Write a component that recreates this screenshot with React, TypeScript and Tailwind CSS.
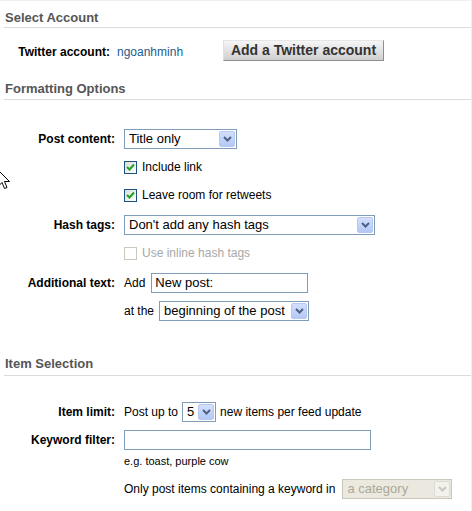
import React from "react";

function Chevron({ color }: { color: string }) {
  return (
    <svg width="9" height="6" viewBox="0 0 9 6">
      <path d="M1 1 L4.5 4.5 L8 1" fill="none" stroke={color} strokeWidth="2" />
    </svg>
  );
}

function Select({
  value,
  className,
  disabled,
}: {
  value: string;
  className: string;
  disabled?: boolean;
}) {
  return (
    <div
      className={`flex h-[20px] shrink-0 items-center justify-between border pr-[1px] text-[13px] ${
        disabled
          ? "border-[#c9c7ba] bg-[#ebe9df] text-[#aca899]"
          : "border-[#7f9db9] bg-white text-black"
      } ${className}`}
    >
      <span className="pl-[4px] leading-[16px] whitespace-nowrap">{value}</span>
      <div
        className={`flex h-[16px] w-[16px] items-center justify-center rounded-[2px] border ${
          disabled
            ? "border-[#dedcd2] bg-[#f3f2ec]"
            : "border-[#b7c8ef] bg-linear-to-b from-[#d3e0fc] to-[#b4c8f6]"
        }`}
      >
        <Chevron color={disabled ? "#c9c7bc" : "#4d6185"} />
      </div>
    </div>
  );
}

function Input({ value, className }: { value?: string; className: string }) {
  return (
    <div
      className={`flex h-[20px] shrink-0 items-center border border-[#7f9db9] bg-white pl-[3px] text-[13px] text-black ${className}`}
    >
      {value}
    </div>
  );
}

function Checkbox({
  checked,
  disabled,
  label,
}: {
  checked?: boolean;
  disabled?: boolean;
  label: string;
}) {
  return (
    <div className="flex items-center">
      <div
        className={`flex h-[13px] w-[13px] items-center justify-center border ${
          disabled
            ? "border-[#cac8bb] bg-white"
            : "border-[#1c5180] bg-linear-to-br from-[#dcdcd7] to-white"
        }`}
      >
        {checked && (
          <svg width="9" height="9" viewBox="0 0 9 9">
            <path d="M1 4 L3.5 6.5 L8 1.5" fill="none" stroke="#21a121" strokeWidth="2" />
          </svg>
        )}
      </div>
      <span
        className={`ml-[5px] text-[12px] ${disabled ? "text-[#a8a8a8]" : "text-black"}`}
      >
        {label}
      </span>
    </div>
  );
}

function SectionHeader({ title, className }: { title: string; className: string }) {
  return (
    <div
      className={`ml-[4px] border-b border-[#dcdcdc] pl-[1px] text-[13px] leading-[16px] font-bold text-[#555555] ${className}`}
    >
      {title}
    </div>
  );
}

function Row({
  label,
  children,
  className,
}: {
  label?: string;
  children: React.ReactNode;
  className?: string;
}) {
  return (
    <div className={`flex h-[28px] items-center ${className ?? ""}`}>
      <div className="w-[115px] shrink-0 text-right text-[12px] font-bold text-black">
        {label}
      </div>
      <div className="ml-[9px] flex items-center text-[12px] text-black">{children}</div>
    </div>
  );
}

export default function App() {
  return (
    <div
      className="relative h-[511px] w-[472px] overflow-hidden border-t border-r border-[#efefef] bg-white"
      style={{ fontFamily: '"Liberation Sans", Arial, sans-serif' }}
    >
      {/* Select Account */}
      <SectionHeader title="Select Account" className="pt-[9px] pb-[1px]" />
      <div className="mt-[12px] flex h-[21px] items-center">
        <div className="w-[110px] shrink-0 pt-[2px] text-right text-[12px] font-bold text-black">
          Twitter account:
        </div>
        <div className="ml-[7px] w-[106px] shrink-0 pt-[2px] text-[12px] text-[#1d5b8f]">
          ngoanhminh
        </div>
        <button className="flex h-[21px] w-[161px] items-center justify-center border border-t-[#e6e6e6] border-r-[#8e8e8e] border-b-[#8e8e8e] border-l-[#e0e0e0] bg-linear-to-b from-[#f6f6f6] to-[#cfcfcf] text-[14px] font-bold text-[#333333]">
          Add a Twitter account
        </button>
      </div>

      {/* Formatting Options */}
      <SectionHeader title="Formatting Options" className="pt-[20px] pb-[2px]" />
      <Row label="Post content:" className="mt-[25px]">
        <Select value="Title only" className="w-[113px]" />
      </Row>
      <Row>
        <Checkbox checked label="Include link" />
      </Row>
      <Row>
        <Checkbox checked label="Leave room for retweets" />
      </Row>
      <Row label="Hash tags:" className="mt-[2px]">
        <Select value="Don't add any hash tags" className="w-[251px]" />
      </Row>
      <Row>
        <Checkbox disabled label="Use inline hash tags" />
      </Row>
      <Row label="Additional text:" className="mt-[2px]">
        <span>Add</span>
        <Input value="New post:" className="ml-[6px] w-[157px]" />
      </Row>
      <Row>
        <span>at the</span>
        <Select value="beginning of the post" className="ml-[5px] w-[150px]" />
      </Row>

      {/* Item Selection */}
      <SectionHeader title="Item Selection" className="pt-[31px] pb-[3px]" />
      <Row label="Item limit:" className="mt-[22px]">
        <span>Post up to</span>
        <Select value="5" className="ml-[4px] w-[34px]" />
        <span className="ml-[4px]">new items per feed update</span>
      </Row>
      <Row label="Keyword filter:">
        <Input className="w-[247px]" />
      </Row>
      <div className="flex h-[14px] items-center pl-[124px] text-[11px] text-black">
        e.g. toast, purple cow
      </div>
      <Row className="mt-[7px]">
        <span>Only post items containing a keyword in</span>
        <Select disabled value="a category" className="ml-[7px] w-[110px]" />
      </Row>

      {/* mouse pointer */}
      <svg
        className="absolute top-[169px] left-[-2px]"
        width="13"
        height="20"
        viewBox="0 0 13 20"
      >
        <path
          d="M0.5 0.5 L0.5 16 L4 12.5 L6.5 18.5 L9 17.5 L6.5 11.5 L11.5 11.5 Z"
          fill="white"
          stroke="black"
          strokeWidth="1"
        />
      </svg>
    </div>
  );
}
